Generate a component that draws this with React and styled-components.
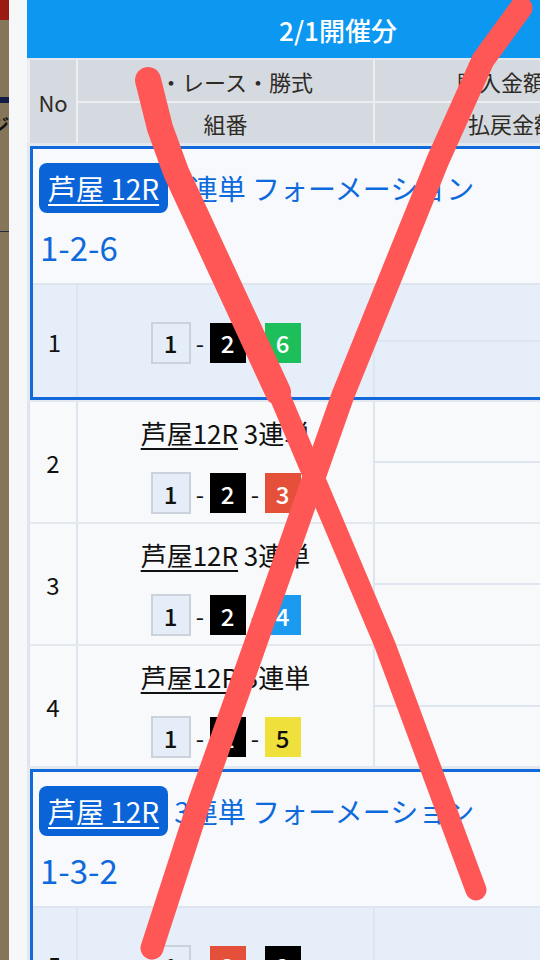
import React from 'react';
import styled, { createGlobalStyle } from 'styled-components';

const GlobalStyle = createGlobalStyle`
  html,
  body {
    margin: 0;
    padding: 0;
  }
  body {
    background: #f6f7f9;
    font-family: "Noto Sans CJK JP", "Noto Sans", sans-serif;
    overflow: hidden;
  }
`;

const Screen = styled.div`
  position: relative;
  display: flex;
  width: 540px;
  height: 960px;
  overflow: hidden;
`;

/* page peeking out behind the sheet */
const Backdrop = styled.div`
  flex: none;
  width: 9px;
  display: flex;
  flex-direction: column;
  background: #857559;
  overflow: hidden;
`;

const RedBand = styled.div`
  height: 20px;
  background: #9b1b12;
`;

const NavyBar = styled.div`
  height: 6px;
  margin-top: 77px;
  background: #141a48;
`;

const EdgeGlyph = styled.span`
  margin: 10px 0 0 -9px;
  font-size: 18px;
  line-height: 22px;
  font-weight: 700;
  color: #111;
  white-space: nowrap;
`;

const EdgeRule = styled.div`
  height: 1px;
  margin-top: 96px;
  background: #262a40;
`;

const Sheet = styled.div`
  flex: 1;
  padding-left: 18px;
  overflow: hidden;
`;

const Panel = styled.div`
  width: 622px;
  display: flex;
  flex-direction: column;
  gap: 2px;
  background: #e3e8ef;
`;

const TitleBar = styled.div`
  height: 58px;
  display: flex;
  align-items: center;
  justify-content: center;
  background: #0c97f0;
  color: #fff;
  font-size: 26px;
  font-weight: 500;
`;

const Head = styled.div`
  display: grid;
  grid-template-columns: 46px 295px 1fr;
  grid-template-rows: 41px 40px;
  gap: 2px;
  padding-left: 3px;
  background: #eceef2;
`;

const HeadCell = styled.div`
  display: flex;
  align-items: center;
  justify-content: center;
  grid-row: ${(p) => (p.$span ? 'span 2' : 'auto')};
  background: #d5d9e0;
  color: #2e2b25;
  font-size: 22px;
  white-space: nowrap;
  overflow: hidden;
`;

const Group = styled.div`
  display: flex;
  flex-direction: column;
  gap: 2px;
  margin: 1px 0 0 3px;
  border: 3px solid #1169dc;
  background: #dfe5ee;
`;

const GroupHead = styled.div`
  box-sizing: border-box;
  height: 134px;
  padding: 14px 0 0 6px;
  background: #f8f9fc;
`;

const TitleLine = styled.div`
  display: flex;
  align-items: center;
  height: 50px;
  white-space: nowrap;
`;

const Badge = styled.a`
  height: 50px;
  padding: 0 9px;
  border-radius: 8px;
  background: #0a64d8;
  color: #fff;
  font-size: 28px;
  line-height: 50px;
  text-decoration: underline;
  text-decoration-thickness: 2px;
  text-underline-offset: 4px;
`;

const BetType = styled.span`
  margin-left: 6px;
  color: #0c6add;
  font-size: 28px;
`;

const Combo = styled.div`
  margin: 11px 0 0 1px;
  color: #0e6adb;
  font-size: 33px;
  line-height: 46px;
`;

const Row = styled.div`
  display: grid;
  grid-template-columns: ${(p) => (p.$inGroup ? '43px' : '46px')} 295px 1fr;
  gap: 2px;
  height: ${(p) => p.$height}px;
  padding-left: ${(p) => (p.$inGroup ? 0 : 3)}px;
  background: #dfe5ee;
`;

const NoCell = styled.div`
  display: flex;
  align-items: center;
  justify-content: center;
  background: ${(p) => p.$bg};
  color: #111;
  font-size: 24px;
`;

const BetCell = styled.div`
  box-sizing: border-box;
  display: flex;
  flex-direction: column;
  align-items: center;
  justify-content: ${(p) => (p.$center ? 'center' : 'flex-start')};
  gap: 22px;
  padding-top: ${(p) => (p.$center ? 3 : 14)}px;
  background: ${(p) => p.$bg};
`;

const RaceLine = styled.div`
  color: #111;
  font-size: 26px;
  line-height: 34px;
  white-space: nowrap;
`;

const RaceLink = styled.a`
  color: #111;
  text-decoration: underline;
  text-decoration-thickness: 2px;
  text-underline-offset: 4px;
`;

const BoxRow = styled.div`
  display: flex;
  align-items: center;
  gap: 5px;
`;

const Dash = styled.span`
  width: 9px;
  text-align: center;
  color: #111;
  font-size: 24px;
`;

const Lane = styled.span`
  box-sizing: border-box;
  width: ${(p) => (p.$outlined ? 40 : 36)}px;
  height: ${(p) => (p.$outlined ? 42 : 40)}px;
  display: flex;
  align-items: center;
  justify-content: center;
  border: ${(p) => (p.$outlined ? '2px solid #cbd2dc' : 'none')};
  background: ${(p) => p.$bg};
  color: ${(p) => p.$fg};
  font-size: 24px;
  font-weight: 500;
`;

const AmountCol = styled.div`
  display: grid;
  grid-template-rows: 1fr 1fr;
  gap: 2px;
`;

const AmountCell = styled.div`
  background: ${(p) => p.$bg};
`;

const Scribble = styled.svg`
  position: absolute;
  inset: 0;
  pointer-events: none;
`;

const lanes = {
  1: { bg: '#e5edf8', fg: '#111' },
  2: { bg: '#000', fg: '#fff' },
  3: { bg: '#e5503b', fg: '#fff' },
  4: { bg: '#1b9bf0', fg: '#fff' },
  5: { bg: '#f0e03c', fg: '#111' },
  6: { bg: '#1dbf5b', fg: '#fff' },
};

const groups = [
  {
    combo: '1-2-6',
    rows: [
      { no: 1, lanes: [1, 2, 6] },
      { no: 2, lanes: [1, 2, 3] },
      { no: 3, lanes: [1, 2, 4] },
      { no: 4, lanes: [1, 2, 5] },
    ],
  },
  {
    combo: '1-3-2',
    rows: [{ no: 5, lanes: [1, 3, 2] }],
  },
];

function Boxes({ picks }) {
  return (
    <BoxRow>
      {picks.map((n, i) => (
        <React.Fragment key={i}>
          {i > 0 && <Dash>-</Dash>}
          <Lane $bg={lanes[n].bg} $fg={lanes[n].fg} $outlined={n === 1}>
            {n}
          </Lane>
        </React.Fragment>
      ))}
    </BoxRow>
  );
}

function BetRow({ row, lead }) {
  const bg = lead ? '#e6eef9' : '#f8f9fb';
  return (
    <Row $inGroup={lead} $height={lead ? 112 : 120}>
      <NoCell $bg={bg}>{row.no}</NoCell>
      <BetCell $bg={bg} $center={lead}>
        {!lead && (
          <RaceLine>
            <RaceLink>芦屋12R</RaceLink> 3連単
          </RaceLine>
        )}
        <Boxes picks={row.lanes} />
      </BetCell>
      <AmountCol>
        <AmountCell $bg={bg} />
        <AmountCell $bg={bg} />
      </AmountCol>
    </Row>
  );
}

function App() {
  return (
    <Screen>
      <GlobalStyle />
      <Backdrop>
        <RedBand />
        <NavyBar />
        <EdgeGlyph>ジ</EdgeGlyph>
        <EdgeRule />
      </Backdrop>
      <Sheet>
        <Panel>
          <TitleBar>2/1開催分</TitleBar>
          <Head>
            <HeadCell $span>No</HeadCell>
            <HeadCell>場・レース・勝式</HeadCell>
            <HeadCell>購入金額計</HeadCell>
            <HeadCell>組番</HeadCell>
            <HeadCell>払戻金額</HeadCell>
          </Head>
          {groups.map((g) => (
            <React.Fragment key={g.combo}>
              <Group>
                <GroupHead>
                  <TitleLine>
                    <Badge>芦屋 12R</Badge>
                    <BetType>3連単 フォーメーション</BetType>
                  </TitleLine>
                  <Combo>{g.combo}</Combo>
                </GroupHead>
                <BetRow row={g.rows[0]} lead />
              </Group>
              {g.rows.slice(1).map((r) => (
                <BetRow key={r.no} row={r} />
              ))}
            </React.Fragment>
          ))}
        </Panel>
      </Sheet>
      <Scribble width="540" height="960" viewBox="0 0 540 960">
        <g fill="none" stroke="#ff5656" strokeLinecap="round" strokeLinejoin="round">
          <path d="M148 80 L160 128 L176 172 L278 392" strokeWidth="26" />
          <path d="M278 392 L385 645 L476 890" strokeWidth="21" />
          <path d="M521 8 L483 60 L438 160 L343 395 L255 645 L200 800 L152 948" strokeWidth="23" />
        </g>
      </Scribble>
    </Screen>
  );
}

export default App;
